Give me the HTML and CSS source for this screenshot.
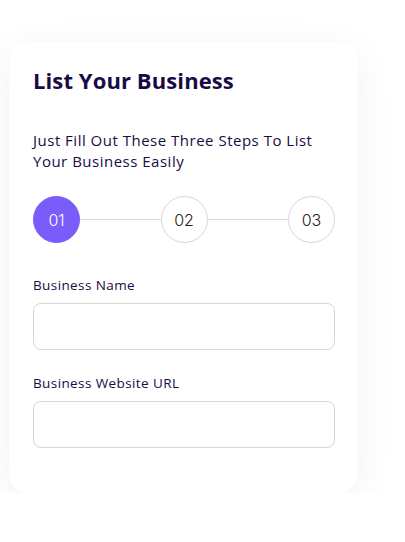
FILE: index.html
```html
<!DOCTYPE html>
<html>
<head>
<meta charset="utf-8">
<link rel="stylesheet" href="styles.css">
</head>
<body>
<div class="card">
  <h1 class="title">List Your Business</h1>
  <p class="subtitle">Just Fill Out These Three Steps To List Your Business Easily</p>
  <div class="steps">
    <div class="step active">01</div>
    <div class="line"></div>
    <div class="step">02</div>
    <div class="line"></div>
    <div class="step">03</div>
  </div>
  <label class="label first">Business Name</label>
  <div class="input"></div>
  <label class="label">Business Website URL</label>
  <div class="input"></div>
</div>
</body>
</html>
```
FILE: styles.css
```css
* { box-sizing: border-box; }
body {
  margin: 0;
  background: #ffffff;
  font-family: "Open Sans", sans-serif;
  color: #1c0a45;
}
.card {
  margin: 42px 0 0 9px;
  width: 349px;
  background: #fff;
  border-radius: 20px;
  padding: 24px 23px 45px 24px;
  box-shadow: 0 8px 40px rgba(0,0,0,0.06);
}
.title {
  margin: 0;
  font-size: 22px;
  line-height: 28px;
  font-weight: 700;
  letter-spacing: 0.1px;
  color: #1c0a45;
}
.subtitle {
  margin: 36px 0 0;
  font-size: 15px;
  line-height: 21px;
  letter-spacing: 0.5px;
  color: #1c0a45;
}
.steps {
  margin-top: 24px;
  display: flex;
  align-items: center;
}
.step {
  width: 47px;
  height: 47px;
  border-radius: 50%;
  border: 1px solid #d6d6d6;
  display: flex;
  align-items: center;
  justify-content: center;
  font-family: "Inter", sans-serif;
  font-weight: 300;
  font-size: 16px;
  color: #222;
  flex: none;
}
.step.active {
  background: #7b5cfa;
  border-color: #7b5cfa;
  color: #fff;
}
.line {
  flex: 1;
  height: 1px;
  background: #d6d6d6;
}
.label {
  display: block;
  margin-top: 24px;
  font-size: 13.5px;
  line-height: 18px;
  letter-spacing: 0.4px;
  color: #1c0a45;
}
.label.first {
  margin-top: 33px;
}
.input {
  margin-top: 9px;
  height: 47px;
  border: 1px solid #d6d6d6;
  border-radius: 8px;
}
```
